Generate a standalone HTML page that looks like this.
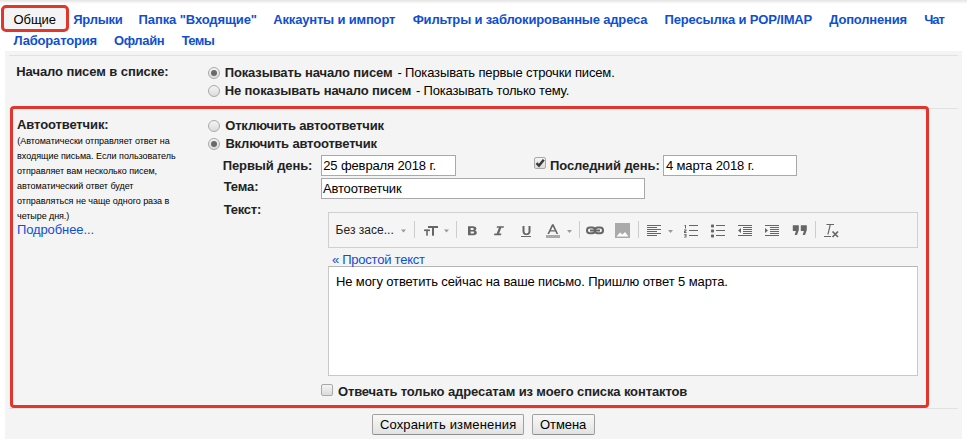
<!DOCTYPE html>
<html><head><meta charset="utf-8">
<style>
html,body{margin:0;padding:0;}
body{width:967px;height:444px;position:relative;overflow:hidden;background:#fff;font-family:"Liberation Sans",sans-serif;}
.t{position:absolute;white-space:pre;font-family:"Liberation Sans",sans-serif;}
.a{position:absolute;}
.topshade{left:0;top:0;width:967px;height:4px;background:linear-gradient(#e4e4e4,#fff);}
.panel{left:5px;top:51px;width:957px;height:388px;background:#f4f4f4;}
.hl{height:1px;background:#e1e1e1;left:9px;width:949px;}
.tabsel{left:1px;top:5px;width:62px;height:21px;border:3px solid #e2352b;border-radius:5px;background:#f4f4f4;}
.redbox{left:10px;top:106px;width:913px;height:296px;border:3px solid #e2352b;border-radius:4px;}
.radio{width:10px;height:10px;border:1px solid #a9a9a9;border-radius:50%;background:linear-gradient(#f4f4f4,#dcdcdc);}
.radio.on::after{content:"";position:absolute;left:2px;top:2px;width:6px;height:6px;border-radius:50%;background:#6a6a6a;}
.cb{width:10px;height:10px;border:1px solid #a9a9a9;border-radius:2px;background:linear-gradient(#f4f4f4,#dcdcdc);}
.inp{background:#fff;border:1px solid #a9a9a9;box-sizing:border-box;}
.tb{left:328px;top:212px;width:590px;height:36px;box-sizing:border-box;border:1px solid #cfcfcf;background:#f5f5f5;}
.ed{left:328px;top:266px;width:590px;height:110px;box-sizing:border-box;border:1px solid #c8c8c8;border-top-color:#b5b5b5;background:#fff;}
.sep{width:1px;height:17px;top:221px;background:#cdcdcd;}
.btn{box-sizing:border-box;border:1px solid #a0a0a0;border-bottom-color:#8e8e8e;border-radius:2px;background:linear-gradient(#f8f8f8,#e2e2e2);}
.ic{position:absolute;}
</style></head><body>
<div class="a topshade"></div>
<div class="a panel"></div>
<div class="a hl" style="top:55px"></div>
<div class="a hl" style="top:108px"></div>
<div class="a hl" style="top:408px"></div>
<div class="a tabsel"></div>
<!-- radios -->
<div class="a radio on" style="left:208px;top:67px"></div>
<div class="a radio" style="left:208px;top:85px"></div>
<div class="a radio" style="left:208px;top:120px"></div>
<div class="a radio on" style="left:208px;top:138px"></div>
<!-- inputs -->
<div class="a inp" style="left:321px;top:155px;width:135px;height:21px"></div>
<div class="a inp" style="left:663px;top:155px;width:134px;height:21px"></div>
<div class="a inp" style="left:321px;top:178px;width:324px;height:21px"></div>
<!-- checkboxes -->
<div class="a cb" style="left:534px;top:157px"><svg width="12" height="12" style="position:absolute;left:-1px;top:-1px"><path d="M2.5 6.2 L5 8.6 L9.8 2.8" fill="none" stroke="#3a3a3a" stroke-width="2.5"/></svg></div>
<div class="a cb" style="left:321px;top:384px"></div>
<!-- toolbar -->
<div class="a tb"></div>
<div class="a ed"></div>
<div class="a sep" style="left:414px"></div>
<div class="a sep" style="left:456px"></div>
<div class="a sep" style="left:579px"></div>
<div class="a sep" style="left:638px"></div>
<div class="a sep" style="left:815px"></div>
<svg class="ic" style="left:0;top:0" width="967" height="444">
 <g fill="#999"><path d="M401 229.5h5l-2.5 3z"/><path d="M444 229.5h5l-2.5 3z"/><path d="M567 230h5l-2.5 3z"/><path d="M668 230h5l-2.5 3z"/></g>
 <g fill="#666">
  <!-- font size tT -->
  <rect x="424" y="229.5" width="6" height="1.6"/><rect x="426.2" y="229.5" width="1.6" height="6.2"/>
  <rect x="428" y="226" width="10" height="2"/><rect x="432" y="226" width="2" height="9.7"/>
  <!-- B -->
  <path d="M468 226.2h5c2.2 0 3.4 1 3.4 2.4c0 1-0.6 1.7-1.4 2c1.1 0.3 1.8 1.1 1.8 2.2c0 1.6-1.2 2.5-3.4 2.5h-5.4zM470.6 228v2h2c0.7 0 1.1-0.4 1.1-1s-0.4-1-1.1-1zM470.6 231.6v2h2.3c0.8 0 1.2-0.4 1.2-1s-0.4-1-1.2-1z"/>
  <!-- I -->
  <path d="M497 226.2h7l-0.4 1.6h-2.3l-2.2 5.8h2.3l-0.4 1.6h-7l0.4-1.6h2.3l2.2-5.8h-2.3z"/>
  <!-- U -->
  <path d="M522.5 226h2v5.4c0 1.3 0.9 2 2 2s2-0.7 2-2v-5.4h2v5.4c0 2.4-1.7 3.6-4 3.6s-4-1.2-4-3.6z"/><rect x="521" y="236" width="10" height="1"/>
  <!-- A -->
  <path d="M552 224.3h1.6l4.6 9.8h-1.7l-1.2-2.7h-5l-1.2 2.7h-1.7zM552.8 226.4l-1.9 3.8h3.8z"/>
 </g>
 <rect x="546" y="235" width="14" height="3" fill="#aaa"/>
 <!-- link -->
 <g fill="none" stroke="#666" stroke-width="2"><rect x="587" y="227.6" width="8" height="5.6" rx="2.8"/><rect x="595" y="227.6" width="8" height="5.6" rx="2.8"/></g>
 <rect x="590" y="229.5" width="10" height="2" fill="#666"/>
 <!-- image -->
 <rect x="615" y="223" width="15" height="15" fill="#aaa"/>
 <path d="M616.5 236.5l3.5-4l2.5 2l2.5-2.5l3.5 4.5z" fill="#fff"/>
 <!-- align -->
 <g fill="#666">
  <rect x="647" y="225" width="14" height="1"/><rect x="647" y="227" width="10" height="1"/>
  <rect x="647" y="229" width="14" height="1"/><rect x="647" y="231" width="10" height="1"/>
  <rect x="647" y="233" width="14" height="1"/><rect x="647" y="235" width="10" height="1"/>
  <!-- numbered -->
  <rect x="689" y="225" width="9" height="1"/><rect x="689" y="230" width="9" height="1"/><rect x="689" y="235" width="9" height="1"/>
  <path d="M684.5 225h1.5v3.5h-1v-2.5h-0.5z"/>
  <path d="M684 229.5h2.5v1.6l-1.5 1h1.5v0.8h-2.5v-1.6l1.5-1h-1.5z"/>
  <path d="M684 234h2.5v3.5h-2.5v-0.8h1.5v-0.6h-1v-0.6h1v-0.7h-1.5z"/>
  <!-- bullets -->
  <rect x="711" y="224.5" width="3" height="3" rx="0.7"/><rect x="711" y="229.5" width="3" height="3" rx="0.7"/><rect x="711" y="234.5" width="3" height="3" rx="0.7"/>
  <rect x="716" y="225" width="9" height="1"/><rect x="716" y="230" width="9" height="1"/><rect x="716" y="235" width="9" height="1"/>
  <!-- indent less -->
  <rect x="738" y="225" width="14" height="1"/><rect x="743" y="227" width="9" height="1"/><rect x="743" y="229" width="9" height="1"/><rect x="743" y="231" width="9" height="1"/><rect x="743" y="233" width="9" height="1"/><rect x="738" y="235" width="14" height="1"/>
  <path d="M738 230.5l3-2.5v5z"/>
  <!-- indent more -->
  <rect x="765" y="225" width="14" height="1"/><rect x="770" y="227" width="9" height="1"/><rect x="770" y="229" width="9" height="1"/><rect x="770" y="231" width="9" height="1"/><rect x="770" y="233" width="9" height="1"/><rect x="765" y="235" width="14" height="1"/>
  <path d="M768 230.5l-3-2.5v5z"/>
  <!-- quote -->
  <path d="M792.8 225.2h6v4.8l-1.8 5h-2.3l1.2-4h-3.1z"/>
  <path d="M800.8 225.2h6v4.8l-1.8 5h-2.3l1.2-4h-3.1z"/>
  <!-- Tx -->
  <path d="M826.5 224h7.5v1h-3.2l-2.3 9.5h-1.2l2.3-9.5h-3.1z"/>
  <rect x="824" y="236" width="7" height="1"/>
 </g>
 <path d="M832.5 231.5l5.5 5.5M838 231.5l-5.5 5.5" stroke="#666" stroke-width="1.7"/>
</svg>

<!-- buttons -->
<div class="a btn" style="left:372px;top:414px;width:152px;height:21px"></div>
<div class="a btn" style="left:532px;top:414px;width:63px;height:21px"></div>
<div class="t" style="left:13.50px;top:12.00px;font-size:13.0px;font-weight:normal;line-height:15px;letter-spacing:-0.050px;color:#000">Общие</div>
<div class="t" style="left:73.20px;top:12.00px;font-size:13.0px;font-weight:bold;line-height:15px;letter-spacing:-0.260px;color:#0f4fd0">Ярлыки</div>
<div class="t" style="left:138.60px;top:12.00px;font-size:13.0px;font-weight:bold;line-height:15px;letter-spacing:-0.107px;color:#0f4fd0">Папка &quot;Входящие&quot;</div>
<div class="t" style="left:273.30px;top:12.00px;font-size:13.0px;font-weight:bold;line-height:15px;letter-spacing:-0.181px;color:#0f4fd0">Аккаунты и импорт</div>
<div class="t" style="left:412.70px;top:12.00px;font-size:13.0px;font-weight:bold;line-height:15px;letter-spacing:-0.177px;color:#0f4fd0">Фильтры и заблокированные адреса</div>
<div class="t" style="left:664.50px;top:12.00px;font-size:13.0px;font-weight:bold;line-height:15px;letter-spacing:-0.153px;color:#0f4fd0">Пересылка и POP/IMAP</div>
<div class="t" style="left:829.20px;top:12.00px;font-size:13.0px;font-weight:bold;line-height:15px;letter-spacing:-0.189px;color:#0f4fd0">Дополнения</div>
<div class="t" style="left:924.20px;top:12.00px;font-size:13.0px;font-weight:bold;line-height:15px;letter-spacing:-1.000px;color:#0f4fd0">Чат</div>
<div class="t" style="left:13.40px;top:33.00px;font-size:13.0px;font-weight:bold;line-height:15px;letter-spacing:-0.180px;color:#0f4fd0">Лаборатория</div>
<div class="t" style="left:113.90px;top:33.00px;font-size:13.0px;font-weight:bold;line-height:15px;letter-spacing:-0.340px;color:#0f4fd0">Офлайн</div>
<div class="t" style="left:181.70px;top:33.00px;font-size:13.0px;font-weight:bold;line-height:15px;letter-spacing:-0.667px;color:#0f4fd0">Темы</div>
<div class="t" style="left:16.30px;top:64.00px;font-size:13.0px;font-weight:bold;line-height:15px;letter-spacing:-0.081px;color:#222">Начало писем в списке:</div>
<div class="t" style="left:224.70px;top:65.00px;font-size:13.0px;font-weight:bold;line-height:15px;letter-spacing:-0.127px;color:#222">Показывать начало писем</div>
<div class="t" style="left:397.40px;top:65.00px;font-size:13.0px;font-weight:normal;line-height:15px;letter-spacing:-0.142px;color:#000">- Показывать первые строчки писем.</div>
<div class="t" style="left:224.70px;top:83.00px;font-size:13.0px;font-weight:bold;line-height:15px;letter-spacing:-0.108px;color:#222">Не показывать начало писем</div>
<div class="t" style="left:416.00px;top:83.00px;font-size:13.0px;font-weight:normal;line-height:15px;letter-spacing:-0.183px;color:#000">- Показывать только тему.</div>
<div class="t" style="left:17.10px;top:117.00px;font-size:13.0px;font-weight:bold;line-height:15px;letter-spacing:-0.117px;color:#222">Автоответчик:</div>
<div class="t" style="left:17.20px;top:136.00px;font-size:9px;font-weight:normal;line-height:10px;letter-spacing:-0.021px;color:#000">(Автоматически отправляет ответ на</div>
<div class="t" style="left:17.10px;top:151.00px;font-size:9px;font-weight:normal;line-height:10px;letter-spacing:-0.024px;color:#000">входящие письма. Если пользователь</div>
<div class="t" style="left:17.10px;top:166.00px;font-size:9px;font-weight:normal;line-height:10px;letter-spacing:-0.037px;color:#000">отправляет вам несколько писем,</div>
<div class="t" style="left:17.10px;top:181.00px;font-size:9px;font-weight:normal;line-height:10px;letter-spacing:-0.052px;color:#000">автоматический ответ будет</div>
<div class="t" style="left:17.10px;top:196.00px;font-size:9px;font-weight:normal;line-height:10px;letter-spacing:-0.027px;color:#000">отправляться не чаще одного раза в</div>
<div class="t" style="left:17.10px;top:211.00px;font-size:9px;font-weight:normal;line-height:10px;letter-spacing:-0.082px;color:#000">четыре дня.)</div>
<div class="t" style="left:16.90px;top:221.50px;font-size:13.0px;font-weight:normal;line-height:15px;letter-spacing:-0.100px;color:#0f4fd0">Подробнее...</div>
<div class="t" style="left:225.20px;top:118.00px;font-size:13.0px;font-weight:bold;line-height:15px;letter-spacing:-0.152px;color:#222">Отключить автоответчик</div>
<div class="t" style="left:225.40px;top:135.60px;font-size:13.0px;font-weight:bold;line-height:15px;letter-spacing:-0.160px;color:#222">Включить автоответчик</div>
<div class="t" style="left:222.70px;top:157.50px;font-size:13.0px;font-weight:bold;line-height:15px;letter-spacing:-0.109px;color:#222">Первый день:</div>
<div class="t" style="left:323.20px;top:158.00px;font-size:13.0px;font-weight:normal;line-height:15px;letter-spacing:-0.118px;color:#000">25 февраля 2018 г.</div>
<div class="t" style="left:550.00px;top:157.70px;font-size:13.0px;font-weight:bold;line-height:15px;letter-spacing:-0.093px;color:#222">Последний день:</div>
<div class="t" style="left:665.90px;top:158.00px;font-size:13.0px;font-weight:normal;line-height:15px;letter-spacing:-0.100px;color:#000">4 марта 2018 г.</div>
<div class="t" style="left:223.70px;top:179.00px;font-size:13.0px;font-weight:bold;line-height:15px;letter-spacing:-0.125px;color:#222">Тема:</div>
<div class="t" style="left:323.00px;top:181.00px;font-size:13.0px;font-weight:normal;line-height:15px;letter-spacing:-0.164px;color:#000">Автоответчик</div>
<div class="t" style="left:223.70px;top:202.00px;font-size:13.0px;font-weight:bold;line-height:15px;letter-spacing:-0.240px;color:#222">Текст:</div>
<div class="t" style="left:335.60px;top:223.00px;font-size:12px;font-weight:normal;line-height:14px;letter-spacing:0.020px;color:#222">Без засе...</div>
<div class="t" style="left:331.90px;top:252.20px;font-size:13.0px;font-weight:normal;line-height:15px;letter-spacing:-0.236px;color:#0f4fd0">« Простой текст</div>
<div class="t" style="left:335.90px;top:274.00px;font-size:13.0px;font-weight:normal;line-height:15px;letter-spacing:-0.107px;color:#000">Не могу ответить сейчас на ваше письмо. Пришлю ответ 5 марта.</div>
<div class="t" style="left:337.90px;top:384.00px;font-size:13.0px;font-weight:bold;line-height:15px;letter-spacing:-0.118px;color:#222">Отвечать только адресатам из моего списка контактов</div>
<div class="t" style="left:379.90px;top:417.00px;font-size:13.0px;font-weight:normal;line-height:15px;letter-spacing:0.156px;color:#000">Сохранить изменения</div>
<div class="t" style="left:540.00px;top:416.70px;font-size:13.0px;font-weight:normal;line-height:15px;letter-spacing:-0.060px;color:#000">Отмена</div>
<div class="a redbox"></div>
</body></html>
